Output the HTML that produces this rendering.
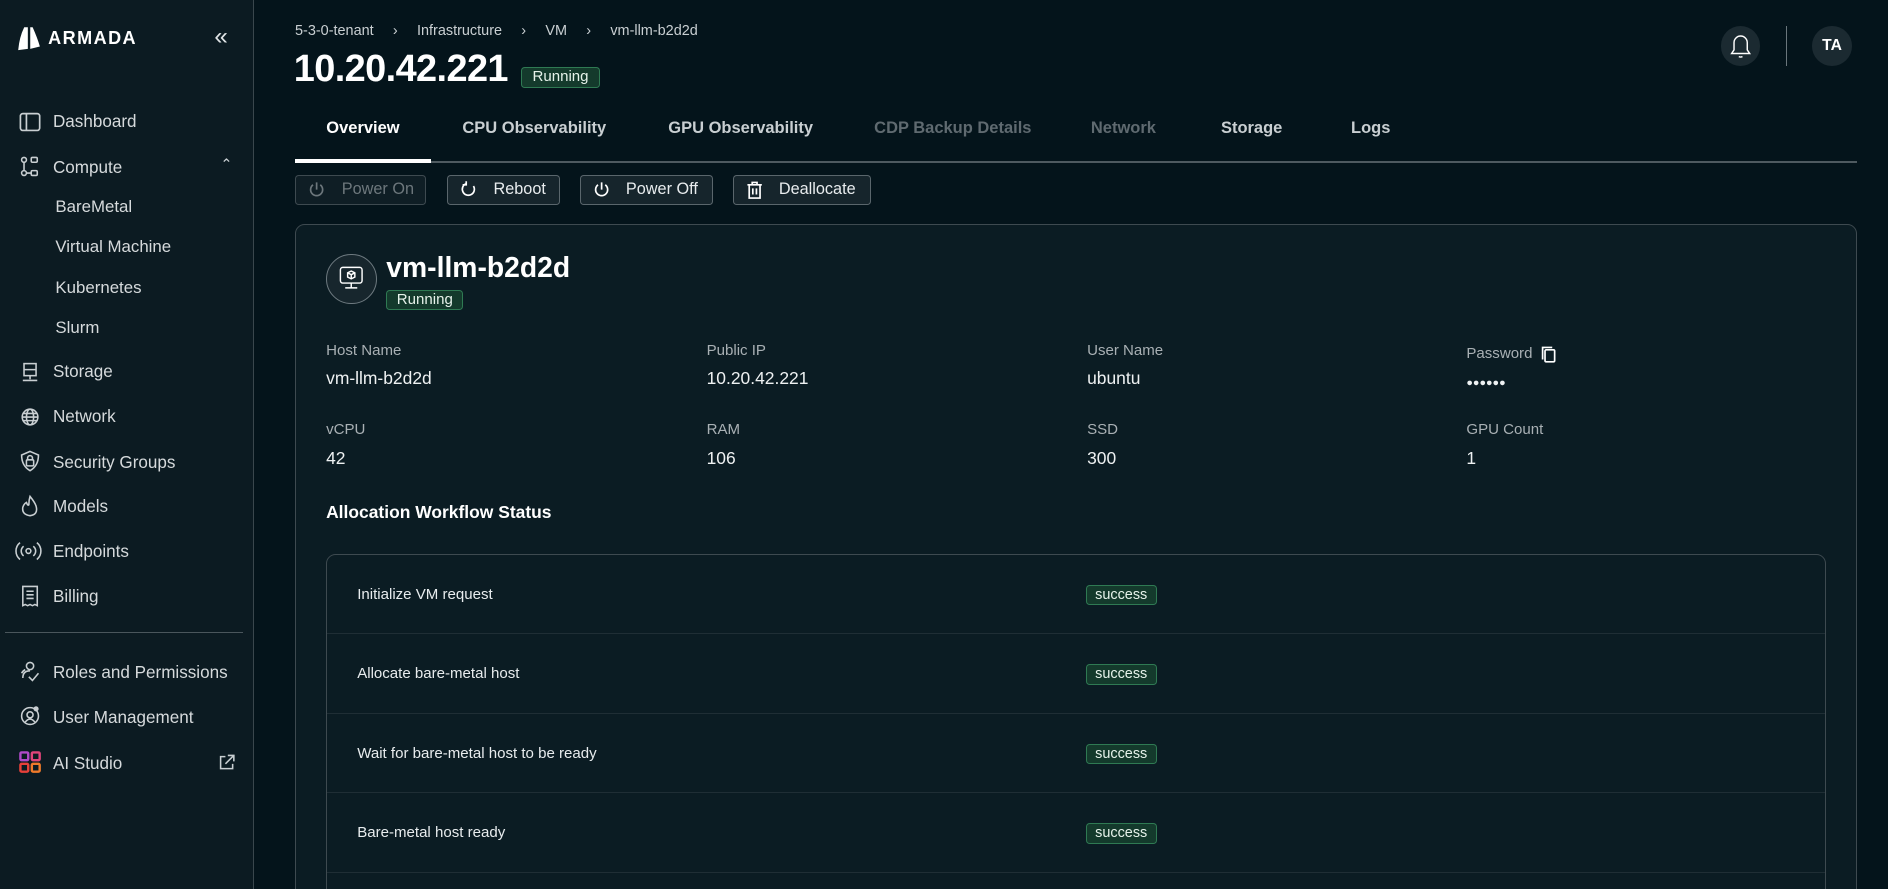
<!DOCTYPE html>
<html><head><meta charset="utf-8"><style>
*{box-sizing:border-box;margin:0;padding:0}
html,body{width:1888px;height:889px;overflow:hidden;background:#04141b}
#root{zoom:1.2041;width:1568px;height:738px;position:relative;font-family:"Liberation Sans",sans-serif;color:#e8ecee;background:#04141b;overflow:hidden}
.abs{position:absolute}
.side{position:absolute;left:0;top:0;width:211px;height:738px;background:#0c1b22;border-right:1px solid #3a474d}
.nav{position:absolute;left:44px;font-size:14.2px;color:#d6dadc;line-height:18px}
.sub{position:absolute;left:46px;font-size:14px;color:#d6dadc;line-height:18px}
.ic{position:absolute;left:15px;width:20px;height:20px}
.badge{position:absolute;background:#143a2c;border:1px solid #2f7a53;border-radius:3px;color:#e6f2ea;font-size:12px;text-align:center;line-height:15px}
.tab{position:absolute;top:99px;font-size:13.7px;font-weight:bold;color:#c9cfd2}
.btn{position:absolute;top:145px;height:25px;border:1px solid #5a666c;border-radius:3px;background:#16252c;font-size:13.5px;color:#e8ecee;line-height:23px}
.btn svg{position:absolute;left:9px;top:4px}
.lbl{position:absolute;font-size:12.5px;color:#a9b0b4}
.val{position:absolute;font-size:14.5px;color:#eef1f2}
.row{position:absolute;left:0;width:1245px;height:66px;border-bottom:1px solid #1f2e35}
.row span{position:absolute;left:25px;top:26px;font-size:12.5px;color:#e8ecee}
.row .badge{left:630px;top:25px;width:59px;height:17px}
</style></head><body><div id="root">
<div class="side">
 <svg class="abs" style="left:14px;top:22px" width="20" height="20" viewBox="0 0 20 20"><path d="M6 1 L9 1 L9 19 L1 20 Q2 9 6 1Z M11 1 L13 1 Q17 10 19 17 L11 19Z" fill="#fff"/></svg>
 <div class="abs" style="left:40px;top:23px;font-size:15px;font-weight:bold;letter-spacing:1.2px;color:#fff">ARMADA</div>
 <div class="abs" style="left:178px;top:19px;font-size:20px;color:#e0e4e6">«</div>
 <svg class="ic" style="top:91px" viewBox="0 0 20 20"><rect x="2" y="3" width="16" height="14" rx="2" fill="none" stroke="#c9cfd2" stroke-width="1.4"/><line x1="7" y1="3" x2="7" y2="17" stroke="#c9cfd2" stroke-width="1.4"/></svg>
 <div class="nav" style="top:92px">Dashboard</div>
 <svg class="ic" style="top:129px" viewBox="0 0 20 20" fill="none" stroke="#c9cfd2" stroke-width="1.3"><circle cx="5" cy="4" r="2"/><rect x="11" y="2" width="5" height="4" rx="1"/><circle cx="5" cy="15" r="2"/><rect x="11" y="13" width="5" height="4" rx="1"/><path d="M5 6v7M7 15h4"/></svg>
 <div class="nav" style="top:130px">Compute</div>
 <div class="abs" style="left:183px;top:130px;font-size:12px;color:#c9cfd2">⌃</div>
 <div class="sub" style="top:163px">BareMetal</div>
 <div class="sub" style="top:196px">Virtual Machine</div>
 <div class="sub" style="top:230px">Kubernetes</div>
 <div class="sub" style="top:263px">Slurm</div>
 <svg class="ic" style="top:299px" viewBox="0 0 20 20" fill="none" stroke="#c9cfd2" stroke-width="1.3"><rect x="5" y="3" width="10" height="10"/><path d="M5 8h10M10 13v3M4 17h12"/></svg>
 <div class="nav" style="top:300px">Storage</div>
 <svg class="ic" style="top:336px" viewBox="0 0 20 20" fill="none" stroke="#c9cfd2" stroke-width="1.3"><circle cx="10" cy="10" r="6.5"/><ellipse cx="10" cy="10" rx="3" ry="6.5"/><path d="M3.5 10h13M4.5 7h11M4.5 13h11"/></svg>
 <div class="nav" style="top:337px">Network</div>
 <svg class="ic" style="top:373px" viewBox="0 0 20 20" fill="none" stroke="#c9cfd2" stroke-width="1.3"><path d="M10 2 L17 5 Q17 14 10 18 Q3 14 3 5Z"/><rect x="7" y="9" width="6" height="5" rx="1"/><path d="M8 9V7.5a2 2 0 0 1 4 0V9"/></svg>
 <div class="nav" style="top:375px">Security Groups</div>
 <svg class="ic" style="top:410px" viewBox="0 0 20 20" fill="none" stroke="#c9cfd2" stroke-width="1.3"><path d="M10 2 Q14 7 15 10 Q17 17 10 18 Q3 17 4 11 Q5 8 7 7 Q8 10 9 9 Q9 5 10 2Z"/></svg>
 <div class="nav" style="top:412px">Models</div>
 <svg class="ic" style="top:448px;left:12px;width:24px" viewBox="0 0 24 20" fill="none" stroke="#c9cfd2" stroke-width="1.3"><circle cx="12" cy="10" r="2"/><path d="M8 6a5 5 0 0 0 0 8M16 6a5 5 0 0 1 0 8M5 3a9 9 0 0 0 0 14M19 3a9 9 0 0 1 0 14"/></svg>
 <div class="nav" style="top:449px">Endpoints</div>
 <svg class="ic" style="top:485px" viewBox="0 0 20 20" fill="none" stroke="#c9cfd2" stroke-width="1.3"><path d="M4 2h12v16l-2-1-2 1-2-1-2 1-2-1-2 1Z M7 6h6M7 9h6M7 12h6"/></svg>
 <div class="nav" style="top:487px">Billing</div>
 <div class="abs" style="left:4px;top:525px;width:198px;height:1px;background:#4a565c"></div>
 <svg class="ic" style="top:548px" viewBox="0 0 20 20" fill="none" stroke="#c9cfd2" stroke-width="1.3"><circle cx="10" cy="5" r="3"/><path d="M4 15q0-6 6-6M9 14l3 3 5-6M3 11q1-2 3-3"/></svg>
 <div class="nav" style="top:550px">Roles and Permissions</div>
 <svg class="ic" style="top:585px" viewBox="0 0 20 20" fill="none" stroke="#c9cfd2" stroke-width="1.3"><circle cx="10" cy="10" r="7"/><circle cx="10" cy="9" r="2.5"/><path d="M6 15q4-5 8 0"/><circle cx="15" cy="4" r="1.5" fill="#c9cfd2"/></svg>
 <div class="nav" style="top:587px">User Management</div>
 <svg class="ic" style="top:623px" viewBox="0 0 20 20" fill="none" stroke-width="2"><rect x="2" y="2" width="6.5" height="6.5" rx="1" stroke="#b04ac8"/><rect x="11.5" y="2" width="6.5" height="6.5" rx="1" stroke="#e0457a"/><rect x="2" y="11.5" width="6.5" height="6.5" rx="1" stroke="#e8403a"/><rect x="11.5" y="11.5" width="6.5" height="6.5" rx="1" stroke="#f07a2a"/></svg>
 <div class="nav" style="top:625px">AI Studio</div>
 <svg class="abs" style="left:180px;top:625px" width="16" height="16" viewBox="0 0 16 16" fill="none" stroke="#c9cfd2" stroke-width="1.3"><path d="M7 3H3v10h10V9M9 2h5v5M14 2 7 9"/></svg>
</div>

<div class="abs" style="left:245px;top:19px;font-size:12px;color:#c9cfd2;word-spacing:2px">5-3-0-tenant &nbsp;&nbsp;›&nbsp;&nbsp; Infrastructure &nbsp;&nbsp;›&nbsp;&nbsp; VM &nbsp;&nbsp;›&nbsp;&nbsp; vm-llm-b2d2d</div>
<div class="abs" style="left:244px;top:40px;font-size:31.5px;font-weight:bold;color:#fff;letter-spacing:-0.5px">10.20.42.221</div>
<div class="badge" style="left:433px;top:56px;width:65px;height:17px;font-size:12.5px">Running</div>
<div class="abs" style="left:1429px;top:22px;width:33px;height:33px;border-radius:50%;background:#1b2a31"></div>
<svg class="abs" style="left:1435px;top:27px" width="21" height="22" viewBox="0 0 21 22" fill="none" stroke="#fff" stroke-width="1.2"><path d="M3 17h15l-2-3V8a5.5 5.5 0 0 0-11 0v6Z M9 19.5q1.5 1 3 0"/></svg>
<div class="abs" style="left:1483px;top:22px;width:1px;height:33px;background:#6a767c"></div>
<div class="abs" style="left:1505px;top:22px;width:33px;height:33px;border-radius:50%;background:#1b2a31;font-size:13px;font-weight:bold;color:#fff;text-align:center;line-height:33px">TA</div>

<div class="tab" style="left:271px;color:#fff">Overview</div>
<div class="tab" style="left:384px">CPU Observability</div>
<div class="tab" style="left:555px">GPU Observability</div>
<div class="tab" style="left:726px;color:#5f6a70">CDP Backup Details</div>
<div class="tab" style="left:906px;color:#5f6a70">Network</div>
<div class="tab" style="left:1014px">Storage</div>
<div class="tab" style="left:1122px">Logs</div>
<div class="abs" style="left:245px;top:134px;width:1297px;height:1px;background:#4e5a60"></div>
<div class="abs" style="left:245px;top:132px;width:113px;height:3px;background:#fff"></div>

<div class="btn" style="left:245px;width:109px;color:#6d777c;border-color:#3e4a50;background:#0f1e25"><svg width="16" height="16" viewBox="0 0 16 16" fill="none" stroke="#6d777c" stroke-width="1.4"><path d="M8 2v6M5 4a5 5 0 1 0 6 0"/></svg><span style="position:absolute;left:38px">Power On</span></div>
<div class="btn" style="left:371px;width:94px"><svg width="16" height="16" viewBox="0 0 16 16" fill="none" stroke="#fff" stroke-width="1.4"><path d="M12 5a5 5 0 1 1-6-2M6 1v3H3"/></svg><span style="position:absolute;left:38px">Reboot</span></div>
<div class="btn" style="left:482px;width:110px"><svg width="16" height="16" viewBox="0 0 16 16" fill="none" stroke="#fff" stroke-width="1.4"><path d="M8 2v6M5 4a5 5 0 1 0 6 0"/></svg><span style="position:absolute;left:37px">Power Off</span></div>
<div class="btn" style="left:609px;width:114px"><svg width="16" height="17" viewBox="0 0 16 17" fill="none" stroke="#fff" stroke-width="1.4"><path d="M2 4h12M6 4V2h4v2M3.5 4v11h9V4M6.5 7v5M9.5 7v5"/></svg><span style="position:absolute;left:37px">Deallocate</span></div>

<div class="abs" style="left:245px;top:186px;width:1297px;height:600px;border:1px solid #3e4a50;border-radius:8px;background:#0b1c23">
 <div class="abs" style="left:25px;top:24px;width:42px;height:42px;border-radius:50%;border:1px solid #6e7a80;background:#17262d"></div>
 <svg class="abs" style="left:35px;top:33px" width="22" height="22" viewBox="0 0 22 22" fill="none" stroke="#fff" stroke-width="1.2"><rect x="2" y="2" width="18" height="13" rx="2"/><path d="M11 15v4M6 19h10M11 5l3 1.5v3.5L11 11.5 8 10V6.5Z M8 6.5l3 1.5 3-1.5M11 8v3.5"/></svg>
 <div class="abs" style="left:75px;top:22px;font-size:23.5px;font-weight:bold;color:#fff">vm-llm-b2d2d</div>
 <div class="badge" style="left:75px;top:54px;width:64px;height:17px;font-size:12.5px">Running</div>
 <div class="lbl" style="left:25px;top:97px">Host Name</div><div class="val" style="left:25px;top:119px">vm-llm-b2d2d</div>
 <div class="lbl" style="left:341px;top:97px">Public IP</div><div class="val" style="left:341px;top:119px">10.20.42.221</div>
 <div class="lbl" style="left:657px;top:97px">User Name</div><div class="val" style="left:657px;top:119px">ubuntu</div>
 <div class="lbl" style="left:972px;top:100px">Password</div>
 <svg class="abs" style="left:1032px;top:100px" width="16" height="16" viewBox="0 0 16 16" fill="none" stroke="#fff" stroke-width="1.4"><path d="M3 12V2h8"/><rect x="5" y="4" width="8" height="10" rx="1"/></svg>
 <div class="val" style="left:972px;top:126px;font-size:9px;letter-spacing:0px">●●●●●●</div>
 <div class="lbl" style="left:25px;top:163px">vCPU</div><div class="val" style="left:25px;top:185px">42</div>
 <div class="lbl" style="left:341px;top:163px">RAM</div><div class="val" style="left:341px;top:185px">106</div>
 <div class="lbl" style="left:657px;top:163px">SSD</div><div class="val" style="left:657px;top:185px">300</div>
 <div class="lbl" style="left:972px;top:163px">GPU Count</div><div class="val" style="left:972px;top:185px">1</div>
 <div class="abs" style="left:25px;top:230px;font-size:14.5px;font-weight:bold;color:#fff">Allocation Workflow Status</div>
 <div class="abs" style="left:25px;top:273px;width:1246px;height:400px;border:1px solid #3e4a50;border-radius:8px;overflow:hidden">
  <div class="row" style="top:0"><span>Initialize VM request</span><div class="badge">success</div></div>
  <div class="row" style="top:66px"><span>Allocate bare-metal host</span><div class="badge">success</div></div>
  <div class="row" style="top:132px"><span>Wait for bare-metal host to be ready</span><div class="badge">success</div></div>
  <div class="row" style="top:198px"><span>Bare-metal host ready</span><div class="badge">success</div></div>
 </div>
</div>
</div></body></html>
